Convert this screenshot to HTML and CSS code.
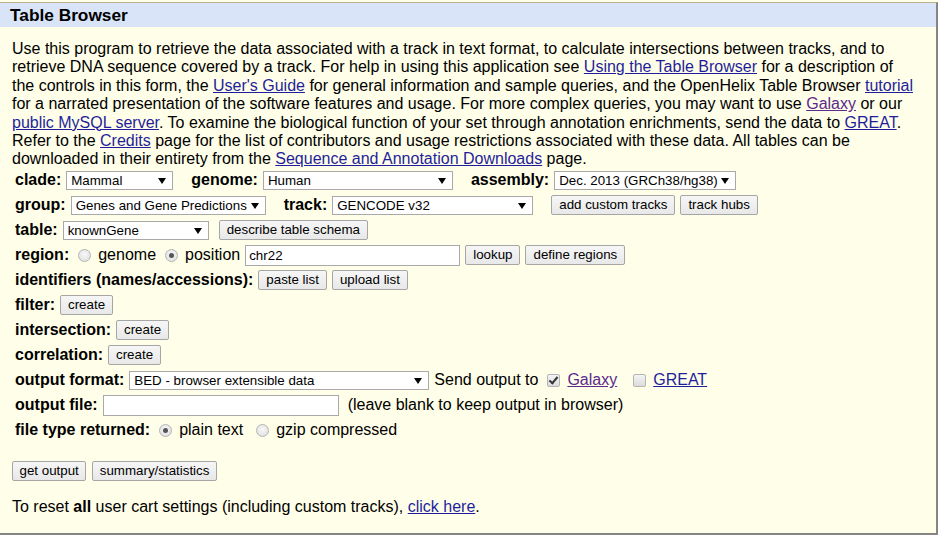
FILE: index.html
```html
<!DOCTYPE html>
<html>
<head>
<meta charset="utf-8">
<title>Table Browser</title>
<link rel="stylesheet" href="styles.css">
</head>
<body>
<div class="frame">
  <div class="titlebar">Table Browser</div>
  <div class="content">
    <p class="intro">Use this program to retrieve the data associated with a track in text format, to calculate intersections between tracks, and to retrieve DNA sequence covered by a track. For help in using this application see <a href="#">Using the Table Browser</a> for a description of the controls in this form, the <a href="#">User's Guide</a> for general information and sample queries, and the OpenHelix Table Browser <a href="#">tutorial</a> for a narrated presentation of the software features and usage. For more complex queries, you may want to use <a href="#" class="visited">Galaxy</a> or our <a href="#">public MySQL server</a>. To examine the biological function of your set through annotation enrichments, send the data to <a href="#">GREAT</a>. Refer to the <a href="#">Credits</a> page for the list of contributors and usage restrictions associated with these data. All tables can be downloaded in their entirety from the <a href="#">Sequence and Annotation Downloads</a> page.</p>

    <div class="form">
      <div class="row">
        <span class="lbl">clade:</span>
        <span class="sel w-clade"><select><option>Mammal</option></select></span>
        <span class="lbl gap">genome:</span>
        <span class="sel w-genome"><select><option>Human</option></select></span>
        <span class="lbl gap">assembly:</span>
        <span class="sel w-assembly"><select><option>Dec. 2013 (GRCh38/hg38)</option></select></span>
      </div>
      <div class="row">
        <span class="lbl">group:</span>
        <span class="sel w-group"><select><option>Genes and Gene Predictions</option></select></span>
        <span class="lbl gap">track:</span>
        <span class="sel w-track"><select><option>GENCODE v32</option></select></span>
        <button class="btn gap2">add custom tracks</button>
        <button class="btn">track hubs</button>
      </div>
      <div class="row">
        <span class="lbl">table:</span>
        <span class="sel w-table"><select><option>knownGene</option></select></span>
        <button class="btn gap3">describe table schema</button>
      </div>
      <div class="row">
        <span class="lbl">region:</span>
        <label class="opt"><input type="radio" name="region"> genome</label>
        <label class="opt"><input type="radio" name="region" checked> position</label>
        <input type="text" class="txt w-pos" value="chr22">
        <button class="btn">lookup</button>
        <button class="btn">define regions</button>
      </div>
      <div class="row">
        <span class="lbl">identifiers (names/accessions):</span>
        <button class="btn">paste list</button>
        <button class="btn">upload list</button>
      </div>
      <div class="row">
        <span class="lbl">filter:</span>
        <button class="btn">create</button>
      </div>
      <div class="row">
        <span class="lbl">intersection:</span>
        <button class="btn">create</button>
      </div>
      <div class="row">
        <span class="lbl">correlation:</span>
        <button class="btn">create</button>
      </div>
      <div class="row">
        <span class="lbl">output format:</span>
        <span class="sel w-format"><select><option>BED - browser extensible data</option></select></span>
        <span class="plain">Send output to</span>
        <label class="chk"><input type="checkbox" checked> <a href="#" class="visited">Galaxy</a></label>
        <label class="chk gap4"><input type="checkbox"> <a href="#">GREAT</a></label>
      </div>
      <div class="row">
        <span class="lbl">output file:</span>
        <input type="text" class="txt w-file">
        <span class="plain gap5">(leave blank to keep output in browser)</span>
      </div>
      <div class="row">
        <span class="lbl">file type returned:</span>
        <label class="opt"><input type="radio" name="ft" checked> plain text</label>
        <label class="opt wider"><input type="radio" name="ft"> gzip compressed</label>
      </div>
    </div>

    <div class="actions">
      <button class="btn">get output</button>
      <button class="btn">summary/statistics</button>
    </div>

    <p class="reset">To reset <b>all</b> user cart settings (including custom tracks), <a href="#">click here</a>.</p>
  </div>
</div>
</body>
</html>
```

FILE: styles.css
```css
* { box-sizing: border-box; }

html, body {
  margin: 0;
  padding: 0;
  background: #FFFEE8;
}

body {
  font-family: "Liberation Sans", Arial, sans-serif;
  font-size: 16px;
  color: #000;
  padding-top: 2px;
}

.frame {
  width: 938px;
  height: 533px;
  border-top: 1px solid #b9b08c;
  border-right: 2px solid #858585;
  border-bottom: 2px solid #858585;
  background: #FFFEE8;
  overflow: hidden;
}

.titlebar {
  background: #D9E4F8;
  height: 24px;
  line-height: 25px;
  padding-left: 10px;
  font-weight: bold;
  font-size: 17.3px;
}

.content {
  padding: 0 12px;
}

a { color: #1f1f9c; text-decoration: underline; }
a.visited { color: #5a2a8c; }

.intro {
  width: 904px;
  margin: 13px 0 0 0;
  line-height: 18.4px;
}

.form {
  padding-left: 3px;
  margin-top: -1px;
}

.row {
  display: flex;
  align-items: center;
  height: 25px;
  white-space: nowrap;
}

.lbl {
  font-weight: bold;
  margin-right: 5px;
}
.lbl.gap { margin-left: 18px; }

.sel {
  position: relative;
  display: inline-block;
  height: 19px;
}
.sel select {
  -webkit-appearance: none;
  appearance: none;
  width: 100%;
  height: 19px;
  border: 1px solid #a9a9a9;
  border-radius: 0;
  background: #fff;
  font-family: "Liberation Sans", Arial, sans-serif;
  font-size: 13.33px;
  color: #000;
  padding: 0 16px 0 4px;
  margin: 0;
  line-height: 17px;
}
.sel::after {
  content: "";
  position: absolute;
  right: 7px;
  top: 7px;
  border-left: 4px solid transparent;
  border-right: 4px solid transparent;
  border-top: 6px solid #000;
  pointer-events: none;
}

.w-clade { width: 107px; }
.w-genome { width: 190px; }
.w-assembly { width: 182px; }
.w-group { width: 195px; }
.w-track { width: 201px; }
.w-table { width: 146px; }
.w-format { width: 300px; margin-right: 5px; }

.btn {
  font-family: "Liberation Sans", Arial, sans-serif;
  font-size: 13.33px;
  color: #000;
  height: 20px;
  padding: 0 7px;
  margin: 0 5px 0 0;
  border: 1px solid #a6a6a6;
  border-radius: 2px;
  background: linear-gradient(#f6f6f6, #e8e8e8);
  line-height: 18px;
}
.btn.gap2 { margin-left: 18px; }
.btn.gap3 { margin-left: 10px; }

.opt {
  display: inline-flex;
  align-items: center;
  margin-left: 4px;
  margin-right: 5px;
}
.opt.wider { margin-left: 8px; }

input[type="radio"] {
  -webkit-appearance: none;
  appearance: none;
  width: 13px;
  height: 13px;
  margin: 0 7px 0 0;
  border: 1px solid #b4b4b4;
  border-radius: 50%;
  background: radial-gradient(circle at 50% 40%, #f8f8f8, #dcdcdc);
  position: relative;
}
input[type="radio"]:checked::after {
  content: "";
  position: absolute;
  left: 3px;
  top: 3px;
  width: 5px;
  height: 5px;
  border-radius: 50%;
  background: #555;
}

input[type="checkbox"] {
  -webkit-appearance: none;
  appearance: none;
  width: 13px;
  height: 13px;
  margin: 0 7px 0 0;
  border: 1px solid #b4b4b4;
  border-radius: 2px;
  background: linear-gradient(#f4f4f4, #dcdcdc);
  position: relative;
}
input[type="checkbox"]:checked::after {
  content: "";
  position: absolute;
  left: 3px;
  top: 0px;
  width: 3px;
  height: 7px;
  border-right: 2px solid #333;
  border-bottom: 2px solid #333;
  transform: rotate(40deg);
}

.chk {
  display: inline-flex;
  align-items: center;
  margin-left: 9px;
}
.chk.gap4 { margin-left: 16px; }

.txt {
  font-family: "Liberation Sans", Arial, sans-serif;
  font-size: 13.33px;
  height: 21px;
  border: 1px solid #a9a9a9;
  background: #fff;
  padding: 0 3px;
  margin: 0 5px 0 0;
}
.w-pos { width: 215px; }
.w-file { width: 236px; }

.gap5 { margin-left: 4px; }

.actions {
  display: flex;
  margin-top: 18px;
}
.actions .btn { margin-right: 6px; padding: 0 6.5px; }

.reset {
  margin: 17px 0 0 0;
  line-height: 18.4px;
}
```
